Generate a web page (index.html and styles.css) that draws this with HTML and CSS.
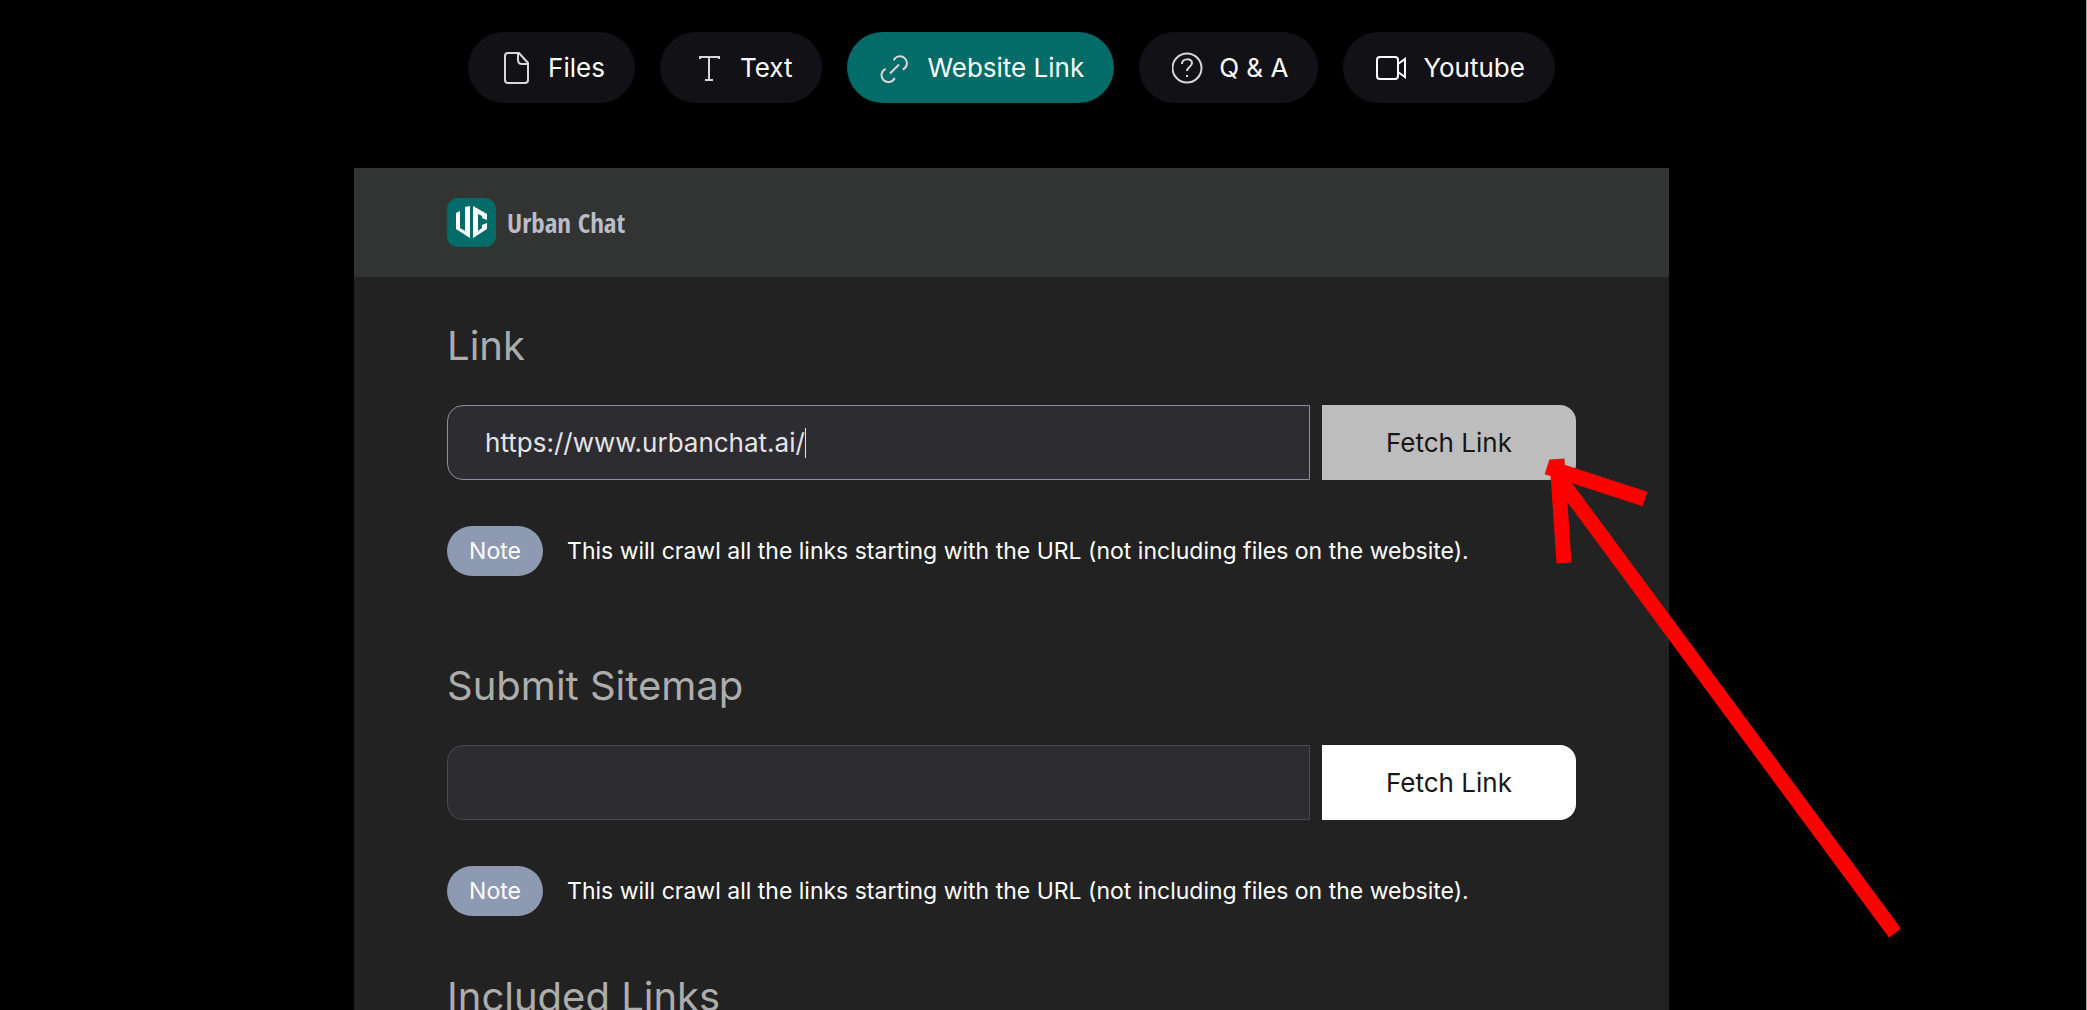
FILE: index.html
```html
<!DOCTYPE html>
<html lang="en">
<head>
<meta charset="utf-8">
<title>Urban Chat</title>
<link rel="stylesheet" href="styles.css">
</head>
<body>
<main class="page">
  <nav class="tabs" aria-label="Source type">
    <button class="tab" type="button">
      <svg class="icon" viewBox="0 0 32 36" aria-hidden="true"><path d="M18 3H7a3 3 0 0 0-3 3v24a3 3 0 0 0 3 3h17a3 3 0 0 0 3-3V13zM17 3v7q0 4 4 4h6"/></svg>
      Files
    </button>
    <button class="tab" type="button">
      <svg class="icon" viewBox="0 0 32 36" aria-hidden="true"><path d="M7 9V7h19v2M16 7v23M12 30h8"/></svg>
      Text
    </button>
    <button class="tab active" type="button" aria-current="page">
      <svg class="icon" viewBox="0 0 32 36" aria-hidden="true"><path d="M10 23.500L19 14.500M13.700 10.300A6.900 6.900 0 1 1 22.700 19.500M5.700 18.800A6.900 6.900 0 1 0 14.700 28"/></svg>
      Website Link
    </button>
    <button class="tab" type="button">
      <svg class="icon" viewBox="0 0 32 36" aria-hidden="true"><circle cx="15" cy="18" r="14.500"/><path d="M10 14c0-6 10-6 10-1 0 4-5 4-5 8M15 25v2"/></svg>
      Q &amp; A
    </button>
    <button class="tab" type="button">
      <svg class="icon bold" viewBox="0 0 32 36" aria-hidden="true"><rect x="1" y="7" width="21" height="22" rx="3"/><path d="M22 14l7-5v18l-7-5"/></svg>
      Youtube
    </button>
  </nav>

  <section class="panel">
    <header class="brand">
      <svg class="logo" viewBox="0 0 49 49" aria-hidden="true"><rect class="logo-bg" width="49" height="49" rx="11"/><path class="logo-mark" d="M9 15l4-2v17l5 3V9l5-1v32L9 31zM26 8l14 8v6l-5-2v-2l-4-2v17l4-3v-3l5-2v6L26 40z"/></svg>
      <span class="brand-name">Urban Chat</span>
    </header>
    <div class="content">
      <form class="block first">
        <label class="title" for="link">Link</label>
        <div class="row">
          <div class="field-box">
            <input class="field focused" id="link" type="text" value="https://www.urbanchat.ai/">
            <span class="caret"></span>
          </div>
          <button class="fetch pressed" type="button">Fetch Link</button>
        </div>
        <p class="note"><span class="badge">Note</span>This will crawl all the links starting with the URL (not including files on the website).</p>
      </form>
      <form class="block">
        <label class="title" for="sitemap">Submit Sitemap</label>
        <div class="row">
          <div class="field-box">
            <input class="field" id="sitemap" type="text">
          </div>
          <button class="fetch" type="button">Fetch Link</button>
        </div>
        <p class="note"><span class="badge">Note</span>This will crawl all the links starting with the URL (not including files on the website).</p>
      </form>
      <h2 class="title">Included Links</h2>
    </div>
    <svg class="arrow" viewBox="0 0 360 490" aria-hidden="true"><path d="M355 483L16 24M7 17L105 49M17 9l7 104"/></svg>
  </section>
</main>
</body>
</html>
```

FILE: styles.css
```css
* { box-sizing: border-box; }
html { background: #000; }
body {
  margin: 0;
  height: 100vh;
  overflow: hidden;
  border-right: 1px solid #a0a09c;
  background: #000;
  color: #fff;
  font-family: Inter, "Liberation Sans", sans-serif;
}
.page { padding: 32px 63px 0 0; }
.tabs {
  display: flex;
  justify-content: center;
  gap: 25px;
  margin-bottom: 65px;
}
.tab {
  display: flex;
  align-items: center;
  gap: 15px;
  height: 71px;
  padding: 0 30px 0 33px;
  border: 0;
  border-radius: 36px;
  background: #121116;
  color: #fff;
  font: 400 26px/32px Inter, "Liberation Sans", sans-serif;
}
.tab.active { background: #036b68; }
.icon {
  width: 32px;
  height: 36px;
  fill: none;
  stroke: #d8d8da;
  stroke-width: 2;
}
.icon.bold { stroke: #fff; }
.panel {
  position: relative;
  width: 65%;
  margin: 0 auto;
  background: #222;
}
.brand {
  display: flex;
  align-items: center;
  gap: 11px;
  height: 109px;
  padding: 0 93px;
  background: #323433;
}
.logo { width: 49px; height: 49px; }
.logo-bg { fill: #036b68; }
.logo-mark { fill: #fff; }
.brand-name {
  color: #bcbcc6;
  font: 700 27px/36px "Open Sans Condensed", "Liberation Sans Narrow", sans-serif;
}
.content { padding: 45px 93px 0; }
.block { margin: 0 0 57px; }
.block.first { margin-bottom: 86px; }
.title {
  display: block;
  margin: 0 0 35px;
  color: #adadad;
  font-size: 40px;
  font-weight: 400;
  line-height: 48px;
}
.row { display: flex; gap: 12px; margin-bottom: 46px; }
.field-box {
  position: relative;
  flex: 1;
  min-width: 0;
}
.field {
  display: block;
  width: 100%;
  height: 75px;
  padding: 0 37px;
  border: 1px solid #4a4a4d;
  border-radius: 16px 0 0 16px;
  outline: 0;
  background: #2d2c31;
  color: #e4e4e6;
  font: 400 26px/32px Inter, "Liberation Sans", sans-serif;
}
.field.focused { border-color: #8f8d9c; }
.caret {
  position: absolute;
  left: 358px;
  top: 23px;
  width: 1px;
  height: 30px;
  background: #e4e4e6;
}
.fetch {
  width: 254px;
  height: 75px;
  border: 0;
  border-radius: 0 16px 16px 0;
  background: #fff;
  color: #161616;
  font: 400 26px/32px Inter, "Liberation Sans", sans-serif;
}
.fetch.pressed { background: #bdbdbd; }
.note {
  display: flex;
  align-items: center;
  gap: 24px;
  margin: 0;
  font-size: 23px;
  line-height: 26px;
}
.badge {
  width: 96px;
  padding: 12px 0;
  border-radius: 25px;
  background: #8e99b2;
  text-align: center;
}
.arrow {
  position: absolute;
  left: calc(100% - 129px);
  top: 282px;
  width: 360px;
  height: 490px;
  fill: none;
  stroke: #f00;
  stroke-width: 15;
}
```
